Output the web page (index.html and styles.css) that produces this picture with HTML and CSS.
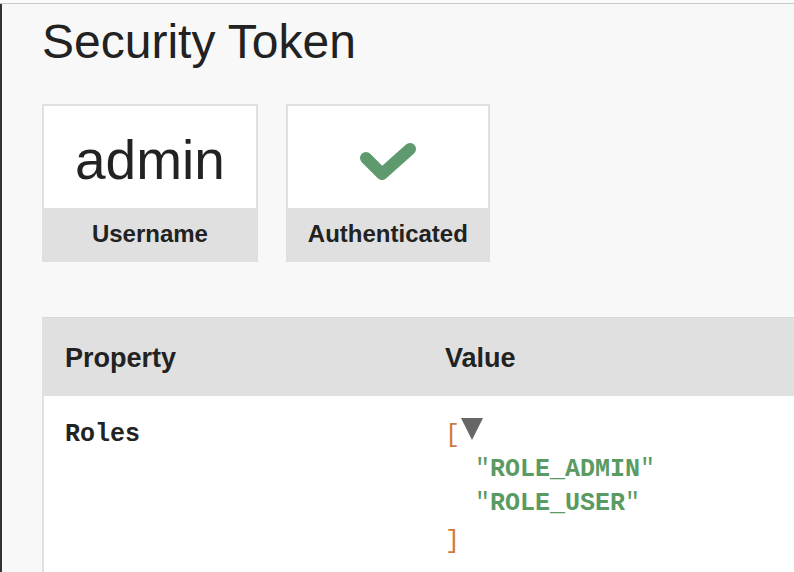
FILE: index.html
```html
<!DOCTYPE html>
<html>
<head>
<meta charset="utf-8">
<link rel="stylesheet" href="styles.css">
</head>
<body>
<div class="topbar"></div>
<div class="main">
  <h1 class="title">Security Token</h1>
  <div class="cards">
    <div class="card">
      <div class="card-value card-text">admin</div>
      <div class="card-label">Username</div>
    </div>
    <div class="card">
      <div class="card-value">
        <svg class="check" width="60" height="102" viewBox="0 0 60 102"><path d="M8 52 L24 68 L52 43" fill="none" stroke="#5e9a6e" stroke-width="12" stroke-linecap="round" stroke-linejoin="round"/></svg>
      </div>
      <div class="card-label">Authenticated</div>
    </div>
  </div>
  <div class="table">
    <div class="thead">
      <div class="cell col-prop">Property</div>
      <div class="cell col-val">Value</div>
    </div>
    <div class="trow">
      <div class="cell col-prop mono key">Roles</div>
      <div class="cell col-val mono">
        <div class="line"><span class="bracket">[</span><svg class="toggle" width="22" height="22" viewBox="0 0 22 22"><polygon points="0,0 22,0 11,22" fill="#666"/></svg></div>
        <div class="line indent"><span class="q">"</span><span class="str">ROLE_ADMIN</span><span class="q">"</span></div>
        <div class="line indent"><span class="q">"</span><span class="str">ROLE_USER</span><span class="q">"</span></div>
        <div class="line close"><span class="bracket">]</span></div>
      </div>
    </div>
  </div>
</div>
</body>
</html>
```
FILE: styles.css
```css
html, body {
  margin: 0;
  padding: 0;
  overflow: hidden;
  background: #f8f8f8;
  font-family: "Liberation Sans", Arial, sans-serif;
  color: #222;
}
.topbar {
  height: 3px;
  background: #fbfbfb;
  border-bottom: 1px solid #c9c9c9;
}
.main {
  border-left: 2px solid #333;
  padding-left: 40px;
  min-height: 600px;
  background: #f8f8f8;
}
.title {
  margin: 0;
  padding-top: 14px;
  font-size: 48px;
  line-height: 47px;
  font-weight: normal;
  color: #222;
}
.cards {
  display: flex;
  gap: 28px;
  margin-top: 39px;
}
.card {
  border: 2px solid #e0e0e0;
  background: #fff;
  display: flex;
  flex-direction: column;
}
.card-value {
  height: 102px;
  padding: 0 31px;
  display: flex;
  justify-content: center;
  align-items: flex-start;
  box-sizing: border-box;
}
.card-text {
  padding-top: 6px;
  font-size: 55px;
  line-height: 96px;
  color: #222;
}
.check {
  display: block;
}
.card-label {
  background: #e0e0e0;
  height: 52px;
  line-height: 52px;
  padding: 0 20px;
  text-align: center;
  font-weight: bold;
  font-size: 24px;
  color: #222;
}
.table {
  margin-top: 55px;
  width: 820px;
  border-left: 2px solid #e0e0e0;
  border-top: 1px solid #dadada;
  background: #fff;
}
.thead {
  display: flex;
  background: #e0e0e0;
  height: 78px;
  box-sizing: border-box;
  padding-top: 3px;
}
.thead .cell {
  font-weight: bold;
  font-size: 27px;
  line-height: 74px;
}
.cell {
  padding-left: 21px;
  box-sizing: border-box;
}
.col-prop {
  width: 380px;
}
.col-val {
  flex: 1;
}
.trow {
  display: flex;
  padding-top: 22px;
  min-height: 200px;
  background: #fff;
}
.mono {
  font-family: "Liberation Mono", "Courier New", monospace;
  font-size: 25px;
  line-height: 34px;
}
.key {
  font-weight: bold;
  color: #222;
}
.line {
  white-space: pre;
}
.indent {
  padding-left: 30px;
}
.close {
  margin-top: 4px;
}
.bracket {
  color: #cf7b3a;
}
.toggle {
  vertical-align: 2px;
  margin-left: 1px;
}
.q {
  color: #5a9a63;
}
.str {
  color: #5a9a63;
  font-weight: bold;
}
```
